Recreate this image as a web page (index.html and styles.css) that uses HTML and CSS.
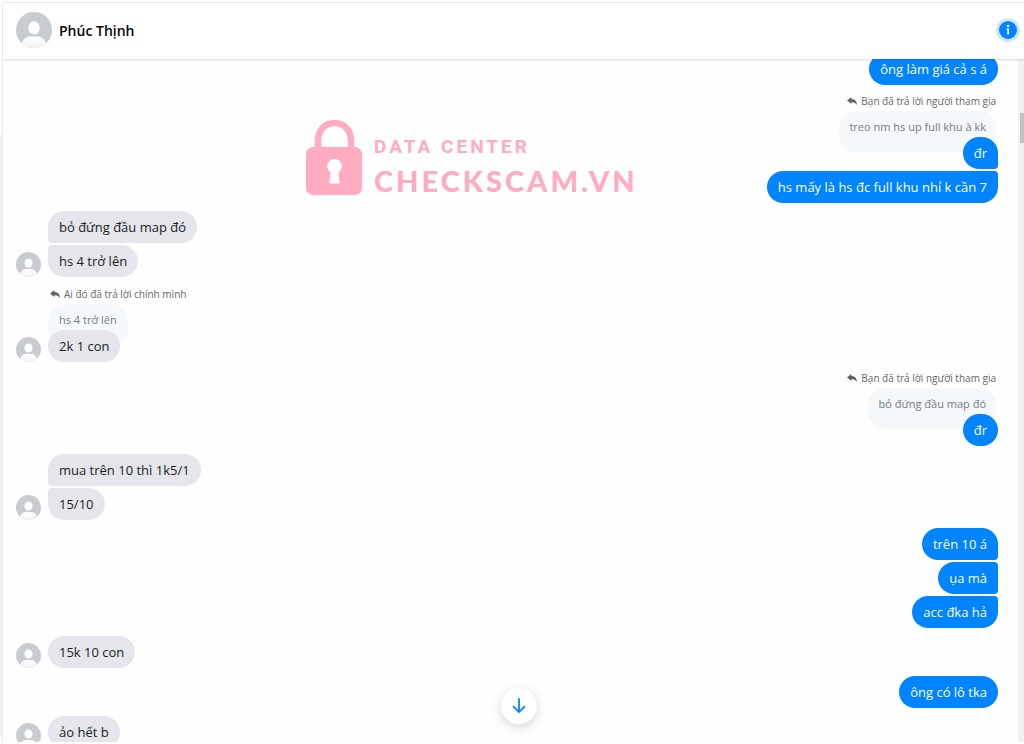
FILE: index.html
```
<!DOCTYPE html>
<html lang="vi">
  <head>
    <meta charset="utf-8">
    <title>Phúc Thịnh</title>
    <link rel="stylesheet" href="styles.css">
  </head>
  <body>
    <svg class="defs" width="0" height="0" aria-hidden="true">
      <linearGradient id="shoulders" x1="0" y1="0" x2="0" y2="1">
        <stop offset="0" stop-color="#fff"/>
        <stop offset="1" stop-color="#f1f2f4"/>
      </linearGradient>
      <symbol id="person" viewBox="0 0 36 36">
        <circle cx="18" cy="18" r="18" fill="#c8cbd0"/>
        <ellipse cx="18" cy="15.800" rx="5.800" ry="6.500" fill="#fff"/>
        <path d="M6 31.400C7.500 26.500 11 24.500 14 24.500h8c3 0 6.500 2 8 6.900A18 18 0 0 1 6 31.400z" fill="url(#shoulders)"/>
      </symbol>
      <symbol id="reply" viewBox="0 0 10 8">
        <path d="M4.400 0L0 3.500 4.400 7V5.200C7 5 8.700 5.700 9.700 8 10.200 4.200 8 2 4.400 1.900z" fill="#606266"/>
      </symbol>
    </svg>

    <div class="chat">
      <header class="header">
        <svg class="avatar-big"><use href="#person"/></svg>
        <h1 class="name">Phúc Thịnh</h1>
        <button class="info" aria-label="Info">
          <svg width="18" height="18" viewBox="0 0 18 18">
            <circle cx="9" cy="9" r="9" fill="#0084ff"/>
            <circle cx="9" cy="5" r="1.300" fill="#fff"/>
            <path d="M7.500 7.500H10v6H8.300V8.700h-.8z" fill="#fff"/>
          </svg>
        </button>
      </header>

      <main class="messages">
        <div class="group sent">
          <p class="bubble">ông làm giá cả s á</p>
        </div>

        <div class="group sent">
          <div class="reply-to"><svg><use href="#reply"/></svg>Bạn đã trả lời người tham gia</div>
          <p class="quote">treo nm hs up full khu à kk</p>
          <p class="bubble first">đr</p>
          <p class="bubble last">hs mấy là hs đc full khu nhỉ k cần 7</p>
        </div>

        <div class="group received">
          <svg class="avatar"><use href="#person"/></svg>
          <p class="bubble first">bỏ đứng đầu map đó</p>
          <p class="bubble last">hs 4 trở lên</p>
        </div>

        <div class="group received">
          <svg class="avatar"><use href="#person"/></svg>
          <div class="reply-to"><svg><use href="#reply"/></svg>Ai đó đã trả lời chính mình</div>
          <p class="quote">hs 4 trở lên</p>
          <p class="bubble">2k 1 con</p>
        </div>

        <div class="group sent">
          <div class="reply-to"><svg><use href="#reply"/></svg>Bạn đã trả lời người tham gia</div>
          <p class="quote">bỏ đứng đầu map đó</p>
          <p class="bubble">đr</p>
        </div>

        <div class="group received">
          <svg class="avatar"><use href="#person"/></svg>
          <p class="bubble first">mua trên 10 thì 1k5/1</p>
          <p class="bubble last">15/10</p>
        </div>

        <div class="group sent">
          <p class="bubble first">trên 10 á</p>
          <p class="bubble first last">ụa mà</p>
          <p class="bubble last">acc đka hả</p>
        </div>

        <div class="group received">
          <svg class="avatar"><use href="#person"/></svg>
          <p class="bubble">15k 10 con</p>
        </div>

        <div class="group sent">
          <p class="bubble">ông có lô tka</p>
        </div>

        <div class="group received">
          <svg class="avatar"><use href="#person"/></svg>
          <p class="bubble">ảo hết b</p>
        </div>
      </main>

      <div class="scrollbar"><div class="thumb"></div></div>

      <div class="watermark">
        <svg width="57" height="76" viewBox="0 0 57 76">
          <path d="M12 30V21C12 10 19 3 28.500 3S45 10 45 21v9" fill="none" stroke="#ffabc0" stroke-width="6.500"/>
          <rect y="27" width="56" height="48" rx="7" fill="#ffabc0"/>
          <path d="M28.500 39a7.200 7.200 0 0 0-3.900 13.200L23.300 63.500h10.400L32.400 52.200A7.200 7.200 0 0 0 28.500 39z" fill="#fff"/>
        </svg>
        <div>
          <div class="mark-top">DATA CENTER</div>
          <div class="mark-name">CHECKSCAM.VN</div>
        </div>
      </div>

      <button class="to-bottom" aria-label="Scroll to bottom">
        <svg width="14" height="16" viewBox="0 0 14 16">
          <path d="M7 1v13M1.500 8.700L7 14.200l5.500-5.500" fill="none" stroke="#0084ff" stroke-width="1.800" stroke-linecap="round" stroke-linejoin="round"/>
        </svg>
      </button>
    </div>
  </body>
</html>
```
FILE: styles.css
```
html, body {
  height: 100%;
  margin: 0;
}

body {
  box-sizing: border-box;
  padding: 2px 0 2px 2px;
  overflow: hidden;
  background: linear-gradient(#fff 135px, #f0f0f0 135px, #f0f0f0 735px, #fff 735px);
  font-family: "Open Sans", "Noto Sans", sans-serif;
  font-size: 13px;
  color: #1c1e21;
}

h1, p {
  margin: 0;
}

button {
  padding: 0;
  border: none;
  display: flex;
  align-items: center;
  justify-content: center;
  border-radius: 50%;
  cursor: pointer;
}

.defs {
  position: absolute;
}

.chat {
  position: relative;
  height: 100%;
  box-sizing: border-box;
  border-top: 1px solid #e9e9e9;
  border-left: 1px solid #e9e9e9;
  background: #fefefe;
  display: grid;
  grid-template-columns: 1fr 6px;
  grid-template-rows: 56px 1fr;
  overflow: hidden;
}

/* header */
.header {
  grid-column: 1 / 3;
  display: flex;
  align-items: center;
  gap: 7px;
  padding: 0 4px 2px 13px;
  background: #fff;
  box-shadow: 0 1px 2px rgba(0,0,0,0.14);
  z-index: 1;
}

.avatar-big {
  width: 36px;
  height: 36px;
}

.name {
  flex: 1;
  font-size: 14px;
  font-weight: 600;
  color: #050505;
}

.info {
  width: 24px;
  height: 24px;
  background: #cfe6ff;
}

/* messages */
.messages {
  display: flex;
  flex-direction: column;
  gap: 8px;
  min-height: 0;
  overflow: hidden;
  padding: 0 20px 0 45px;
  margin-top: -6px;
}

.group {
  position: relative;
  flex: none;
  display: flex;
  flex-direction: column;
  align-items: flex-start;
  gap: 2px;
}

.sent {
  align-items: flex-end;
}

.avatar {
  position: absolute;
  left: -32px;
  bottom: 0;
  width: 25px;
  height: 25px;
}

.bubble {
  position: relative;
  padding: 6px 11px;
  line-height: 20px;
  border-radius: 16px;
  background: #e4e6eb;
}

.sent .bubble {
  background: #0084ff;
  color: #fff;
}

.received .first {
  border-bottom-left-radius: 4px;
}

.received .last {
  border-top-left-radius: 4px;
}

.sent .first {
  border-bottom-right-radius: 4px;
}

.sent .last {
  border-top-right-radius: 4px;
}

.reply-to {
  display: flex;
  align-items: center;
  gap: 4px;
  height: 16px;
  padding: 0 2px;
  font-size: 10px;
  color: #65676b;
}

.received .reply-to {
  height: 17px;
}

.reply-to svg {
  width: 10px;
  height: 8px;
}

.quote {
  height: 25px;
  padding: 8px 11px;
  margin-bottom: -17px;
  line-height: 16px;
  font-size: 11px;
  color: #77797d;
  border-radius: 16px;
  background: #f5f8fa;
}

.sent .quote {
  margin-right: 2px;
  padding: 8px 10px;
}

/* scrollbar */
.scrollbar {
  background: #f1f1f1;
  padding: 54px 0 0 2px;
}

.thumb {
  height: 30px;
  background: #c1c1c1;
}

/* over the messages */
.watermark {
  position: absolute;
  left: 303px;
  top: 117px;
  display: flex;
  gap: 11px;
  color: #ffabc0;
  white-space: nowrap;
}

.mark-top {
  margin-top: 15px;
  font: 700 19px/24px Roboto, sans-serif;
  letter-spacing: 3px;
}

.mark-name {
  margin-top: 6px;
  font: 900 29px/32px Lato, sans-serif;
  letter-spacing: 3px;
}

.to-bottom {
  position: absolute;
  left: 50%;
  bottom: 18px;
  width: 36px;
  height: 36px;
  margin-left: -13px;
  background: #fff;
  box-shadow: 0 3px 12px rgba(0,0,0,0.16);
}
```
